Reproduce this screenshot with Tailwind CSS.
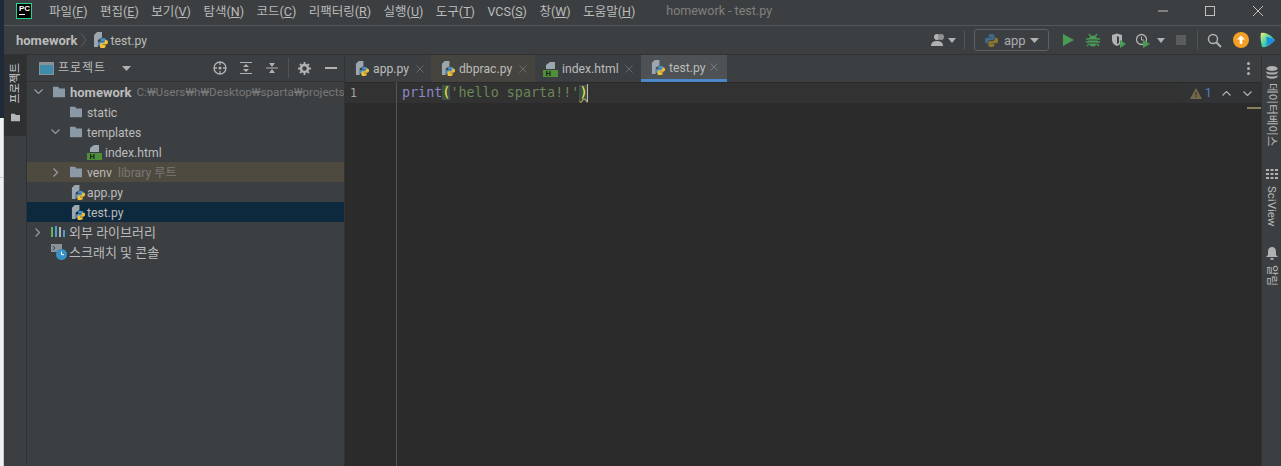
<!DOCTYPE html>
<html lang="ko">
<head>
<meta charset="utf-8" />
<title>homework - test.py</title>
<script src="https://cdn.jsdelivr.net/npm/@tailwindcss/browser@4"></script>
</head>
<body class="w-[1281px] h-[466px] overflow-hidden bg-[#3c3f41] text-[#bbbbbb] text-[13px] font-['Roboto','Noto_Sans_CJK_KR',sans-serif]">
<svg class="hidden">
  <symbol id="py" viewBox="0 0 16 16">
    <path d="M1 3l3-3h5v5.500L5 8v7H1z" fill="#9aa7b0"/>
    <path d="M10 6c-2 0-2.500.8-2.500 1.800V9h3v.6H7c-1.200 0-2 .8-2 2.200s.8 2.200 2 2.200h1v-1.300c0-1 .8-1.700 1.800-1.700h1.700c.9 0 1.500-.7 1.500-1.500V7.800C13 6.800 12 6 10 6z" fill="#4a90c4"/>
    <path d="M10 16c2 0 2.500-.8 2.500-1.800V13h-3v-.6H13c1.200 0 2-.8 2-2.200s-.8-2.200-2-2.200h-1v1.300c0 1-.8 1.700-1.800 1.700H8.500c-.9 0-1.500.7-1.500 1.500v2.300c0 1 1 1.700 3 1.700z" fill="#f2c037"/>
  </symbol>
  <symbol id="html" viewBox="0 0 16 16">
    <path d="M3 8V4l4-3h5v7z" fill="#9aa7b0"/>
    <rect x="0" y="9" width="15" height="7" fill="#4f8f3a"/>
    <path d="M3 10h1.300v2h2v-2h1.300v5H6.300v-2h-2v2H3z" fill="#1f2d1a"/>
  </symbol>
  <symbol id="folder" viewBox="0 0 16 14">
    <path d="M1 1h6l1.500 2H15v10H1z" fill="#8a99a5"/>
  </symbol>
</svg>

<div class="flex h-full">
  <div class="w-[4px] shrink-0 flex flex-col">
    <div class="h-[118px] bg-[#1f2a38]"></div>
    <div class="h-[59px] bg-[#f0f0f0] border-r border-[#c8c8c8]"></div>
    <div class="h-px bg-[#c8c8c8]"></div>
    <div class="flex-1 bg-[#f0f0f0] border-r border-[#c8c8c8]"></div>
  </div>

  <div class="flex-1 min-w-0 flex flex-col">
    <!-- title bar -->
    <div class="h-[26px] shrink-0 flex items-center border-b border-[#55585a]">
      <div class="ml-[12px] -mt-[4px] w-[16px] h-[16px] bg-black border border-[#21d789] text-white text-[8px] font-bold leading-[9px] pl-[2px] font-['Liberation_Sans']">PC<div class="w-[6px] h-[1px] bg-white mt-[1px]"></div></div>
      <div class="ml-[17px] flex gap-[12.5px] text-[#bbbbbb] text-[12.5px] whitespace-nowrap">
        <span>파일(<u>F</u>)</span><span>편집(<u>E</u>)</span><span>보기(<u>V</u>)</span><span>탐색(<u>N</u>)</span><span>코드(<u>C</u>)</span><span>리팩터링(<u>R</u>)</span><span>실행(<u>U</u>)</span><span>도구(<u>T</u>)</span><span>VCS(<u>S</u>)</span><span>창(<u>W</u>)</span><span>도움말(<u>H</u>)</span>
      </div>
      <span class="ml-[31px] text-[#808080] text-[12.5px] -mt-[2px]">homework - test.py</span>
      <div class="ml-auto flex items-center text-[#c0c0c0] -mt-[3px]">
        <svg class="w-[12px] h-[12px] mr-[35px]" viewBox="0 0 12 12"><path d="M1 6h10" stroke="currentColor"/></svg>
        <svg class="w-[12px] h-[12px] mr-[36px]" viewBox="0 0 12 12"><rect x="1.500" y="1.500" width="9" height="9" fill="none" stroke="currentColor"/></svg>
        <svg class="w-[12px] h-[12px] mr-[17px]" viewBox="0 0 12 12"><path d="M1 1l10 10M11 1L1 11" stroke="currentColor"/></svg>
      </div>
    </div>

    <!-- nav bar -->
    <div class="h-[29px] shrink-0 flex items-center border-b border-[#323232]">
      <span class="ml-[12px] mt-[2px] font-bold text-[#bbbbbb]">homework</span>
      <svg class="w-[8px] h-[16px] ml-[2px]" viewBox="0 0 8 16"><path d="M1 1l5 7-5 7" fill="none" stroke="#5a5d5f"/></svg>
      <svg class="w-[16px] h-[16px] ml-[5px]"><use href="#py"/></svg>
      <span class="ml-[2px] mt-[2px] text-[12.2px]">test.py</span>
      <div class="ml-auto flex items-center">
        <svg class="w-[15px] h-[14px]" viewBox="0 0 15 14"><circle cx="6" cy="4" r="3" fill="#afb1b3"/><path d="M0 13c0-4 3-5 6-5s6 1 6 5z" fill="#afb1b3"/><circle cx="10" cy="4" r="3" fill="#8f9193"/></svg>
        <svg class="w-[8px] h-[5px] ml-[2px]" viewBox="0 0 8 5"><path d="M0 0h8L4 5z" fill="#afb1b3"/></svg>
        <div class="w-px h-[20px] bg-[#515355] ml-[8px]"></div>
        <div class="ml-[9px] w-[75px] h-[22px] border border-[#5e6163] rounded-[3px] flex items-center pl-[9px]">
          <svg class="w-[15px] h-[15px]" viewBox="0 0 16 16"><path d="M8 1C5.500 1 5 2 5 3v1.500h3.500V5H3c-1.200 0-2 1-2 3s.8 3 2 3h1.500V9.500C4.500 8.300 5.500 7.500 7 7.500h2.500c1 0 1.800-.8 1.800-1.800V3c0-1-1-2-3.300-2z" fill="#3f6a8c"/><path d="M8 15c2.500 0 3-1 3-2v-1.500H7.500V11H13c1.200 0 2-1 2-3s-.8-3-2-3h-1.500v1.500c0 1.200-1 2-2.500 2H6.500c-1 0-1.800.8-1.800 1.800V13c0 1 1 2 3.300 2z" fill="#8a7430"/></svg>
          <span class="ml-[5px] mt-[2px] text-[#a9abad]">app</span>
          <svg class="w-[9px] h-[5px] ml-auto mr-[9px]" viewBox="0 0 9 5"><path d="M0 0h9L4.500 5z" fill="#afb1b3"/></svg>
        </div>
        <svg class="w-[11px] h-[12px] ml-[14px]" viewBox="0 0 11 12"><path d="M0 0l11 6-11 6z" fill="#499c54"/></svg>
        <svg class="w-[14px] h-[14px] ml-[12px]" viewBox="0 0 14 14"><path d="M3 1l2 2.500M11 1L9 3.500M0 6h14M0 9h14M1 13l2-2M13 13l-2-2" stroke="#499c54" fill="none" stroke-width="1.300"/><ellipse cx="7" cy="8" rx="4.500" ry="5.500" fill="#499c54"/><path d="M3 7h8M3 10h8" stroke="#3c3f41"/></svg>
        <svg class="w-[16px] h-[15px] ml-[11px]" viewBox="0 0 16 15"><path d="M1 2l5-1.500L11 2v5c0 3-2 5-5 6-3-1-5-3-5-6z" fill="#afb1b3"/><path d="M6 3v8l2-1V4z" fill="#3c3f41"/><path d="M9 7l6 4-6 4z" fill="#499c54"/></svg>
        <svg class="w-[16px] h-[15px] ml-[8px]" viewBox="0 0 16 15"><circle cx="6.500" cy="6.500" r="5" fill="none" stroke="#afb1b3" stroke-width="1.300"/><path d="M6.500 3.500v3.500H9" stroke="#afb1b3" fill="none"/><path d="M8 7l7 4-7 4z" fill="#499c54"/></svg>
        <svg class="w-[8px] h-[5px] ml-[6px]" viewBox="0 0 8 5"><path d="M0 0h8L4 5z" fill="#afb1b3"/></svg>
        <div class="w-[10px] h-[10px] bg-[#5a5c5e] ml-[11px]"></div>
        <div class="w-px h-[20px] bg-[#515355] ml-[11px]"></div>
        <svg class="w-[15px] h-[15px] ml-[9px]" viewBox="0 0 15 15"><circle cx="6" cy="6" r="4.500" fill="none" stroke="#afb1b3" stroke-width="1.500"/><path d="M9.500 9.500l4.500 4.500" stroke="#afb1b3" stroke-width="2"/></svg>
        <svg class="w-[16px] h-[16px] ml-[11px]" viewBox="0 0 16 16"><circle cx="8" cy="8" r="8" fill="#f4a023"/><path d="M8 3.500l4 4H9.300V12H6.700V7.500H4z" fill="#fff"/></svg>
        <svg class="w-[15px] h-[16px] ml-[11px] mr-[6px]" viewBox="0 0 15 16">
          <defs>
            <linearGradient id="logo" x1="0" y1="0" x2="1" y2="1">
              <stop offset="0" stop-color="#f2f07a"/>
              <stop offset="0.45" stop-color="#4fd6a0"/>
              <stop offset="1" stop-color="#1e8fe0"/>
            </linearGradient>
          </defs>
          <path d="M1 1c5-1 11 3 14 7-3 4-9 8-13 7-1-4-2-10-1-14z" fill="url(#logo)"/>
          <path d="M6 5c3 0 6 1.500 9 3-3 3-6 5-9 5 1-3 1-5 0-8z" fill="#1e8fe0"/>
        </svg>
      </div>
    </div>

    <div class="flex-1 min-h-0 flex">
      <!-- left tool strip -->
      <div class="w-[22px] shrink-0 self-start h-[81px] bg-[#2e3032] flex flex-col items-center">
        <span class="mt-[8px] [writing-mode:vertical-rl] [text-orientation:sideways] rotate-180 text-[11px] text-[#d0d2d4] leading-[13px]">프로젝트</span>
        <svg class="w-[11px] h-[9px] mt-[10px]" viewBox="0 0 16 14"><path d="M1 1h6l1.500 2H15v10H1z" fill="#b4b6b8"/></svg>
      </div>

      <!-- project panel -->
      <div class="w-[318px] shrink-0 border-l border-[#323232] flex flex-col min-h-0">
        <div class="h-[27px] shrink-0 flex items-center border-b border-[#323232]">
          <svg class="w-[15px] h-[13px] ml-[12px]" viewBox="0 0 15 13"><rect width="15" height="13" fill="#8a9299"/><rect x="1" y="3" width="13" height="9" fill="#3f8bab"/></svg>
          <span class="ml-[4px] text-[12px] tracking-[1px]">프로젝트</span>
          <svg class="w-[9px] h-[5px] ml-[16px]" viewBox="0 0 9 5"><path d="M0 0h9L4.500 5z" fill="#afb1b3"/></svg>
          <div class="ml-auto mr-[7px] flex items-center">
            <svg class="w-[14px] h-[14px]" viewBox="0 0 14 14"><circle cx="7" cy="7" r="6" fill="none" stroke="#afb1b3" stroke-width="1.300"/><circle cx="7" cy="7" r="1.600" fill="#afb1b3"/><path d="M7 1v3M7 10v3M1 7h3M10 7h3" stroke="#afb1b3" stroke-width="1.300"/></svg>
            <svg class="w-[12px] h-[12px] ml-[13px]" viewBox="0 0 12 12"><path d="M0 .5h12M0 11.500h12" stroke="#afb1b3"/><path d="M6 2l3 3H3zM6 10L3 7h6z" fill="#afb1b3"/></svg>
            <svg class="w-[12px] h-[12px] ml-[14px]" viewBox="0 0 12 12"><path d="M0 5.500h12M0 6.500h12" stroke="#afb1b3" stroke-width=".5"/><path d="M6 5L3 1h6zM6 7l3 4H3z" fill="#afb1b3"/></svg>
            <div class="w-px h-[20px] bg-[#515355] ml-[10px]"></div>
            <svg class="w-[13px] h-[13px] ml-[9px]" viewBox="0 0 13 13"><circle cx="6.500" cy="6.500" r="3.500" fill="none" stroke="#afb1b3" stroke-width="2.500"/><path d="M6.500 0v2.500M6.500 10.500V13M0 6.500h2.500M10.500 6.500H13M2 2l1.800 1.800M9.200 9.200L11 11M11 2L9.200 3.800M3.800 9.200L2 11" stroke="#afb1b3" stroke-width="1.800"/></svg>
            <div class="w-[12px] h-[2px] bg-[#afb1b3] ml-[14px]"></div>
          </div>
        </div>

        <div class="flex-1 whitespace-nowrap overflow-hidden text-[12.2px] [&>div>span]:mt-[2px] [&>div>svg]:shrink-0">
          <div class="h-[20px] flex items-center">
            <svg class="w-[9px] h-[6px] ml-[7px]" viewBox="0 0 9 6"><path d="M.5.500l4 4 4-4" fill="none" stroke="#9a9c9e" stroke-width="1.200"/></svg>
            <svg class="w-[14px] h-[12px] ml-[9px]"><use href="#folder"/></svg>
            <span class="ml-[4px] font-bold text-[13px]">homework</span>
            <span class="ml-[5px] text-[#787878] text-[11.700px]">C:₩Users₩h₩Desktop₩sparta₩projects</span>
          </div>
          <div class="h-[20px] flex items-center">
            <svg class="w-[14px] h-[12px] ml-[42px]"><use href="#folder"/></svg>
            <span class="ml-[4px]">static</span>
          </div>
          <div class="h-[20px] flex items-center">
            <svg class="w-[9px] h-[6px] ml-[24px]" viewBox="0 0 9 6"><path d="M.5.500l4 4 4-4" fill="none" stroke="#9a9c9e" stroke-width="1.200"/></svg>
            <svg class="w-[14px] h-[12px] ml-[9px]"><use href="#folder"/></svg>
            <span class="ml-[4px]">templates</span>
          </div>
          <div class="h-[20px] flex items-center">
            <svg class="w-[16px] h-[16px] ml-[60px]"><use href="#html"/></svg>
            <span class="ml-[2px]">index.html</span>
          </div>
          <div class="h-[20px] flex items-center bg-[#4e4a3f]">
            <svg class="w-[6px] h-[9px] ml-[26px]" viewBox="0 0 6 9"><path d="M.5.500l4 4-4 4" fill="none" stroke="#9a9c9e" stroke-width="1.200"/></svg>
            <svg class="w-[14px] h-[12px] ml-[10px]"><use href="#folder"/></svg>
            <span class="ml-[4px]">venv</span>
            <span class="ml-[6px] text-[#787878]">library 루트</span>
          </div>
          <div class="h-[20px] flex items-center">
            <svg class="w-[15px] h-[15px] ml-[44px]"><use href="#py"/></svg>
            <span class="ml-[1px]">app.py</span>
          </div>
          <div class="h-[20px] flex items-center bg-[#0d293e]">
            <svg class="w-[15px] h-[15px] ml-[44px]"><use href="#py"/></svg>
            <span class="ml-[1px]">test.py</span>
          </div>
          <div class="h-[20px] flex items-center">
            <svg class="w-[6px] h-[9px] ml-[8px]" viewBox="0 0 6 9"><path d="M.5.500l4 4-4 4" fill="none" stroke="#9a9c9e" stroke-width="1.200"/></svg>
            <svg class="w-[15px] h-[12px] ml-[10px]" viewBox="0 0 15 12"><path d="M1 1v10" stroke="#6fae5f" stroke-width="2"/><path d="M5 0v11" stroke="#4c9fc9" stroke-width="2"/><path d="M9 1v10" stroke="#afb1b3" stroke-width="2"/><path d="M13 4v7" stroke="#4c9fc9" stroke-width="2"/></svg>
            <span class="ml-[3px] text-[13px]">외부 라이브러리</span>
          </div>
          <div class="h-[20px] flex items-center">
            <svg class="w-[16px] h-[16px] ml-[24px]" viewBox="0 0 16 16"><rect x="0" y="0" width="11" height="8" fill="#8a9299"/><path d="M2 2l2 2-2 2" stroke="#3c3f41" fill="none"/><circle cx="10.500" cy="10.500" r="5.500" fill="#3592c4"/><path d="M10.500 7.500v3.200h2.500" stroke="#fff" fill="none"/></svg>
            <span class="ml-[2px] text-[13px]">스크래치 및 콘솔</span>
          </div>
        </div>
      </div>

      <!-- editor -->
      <div class="flex-1 min-w-0 flex flex-col border-l border-[#323232]">
        <div class="h-[27px] shrink-0 flex items-stretch text-[#bbbbbb] text-[12.2px] [&>div>span]:mt-[2px]">
          <div class="w-[86px] flex items-center bg-[#3c3f41]">
            <svg class="w-[15px] h-[15px] ml-[10px]"><use href="#py"/></svg>
            <span class="ml-[3px]">app.py</span>
            <svg class="w-[8px] h-[8px] ml-auto mr-[7px]" viewBox="0 0 9 9"><path d="M.5.500l8 8M8.500.500l-8 8" stroke="#6e7072"/></svg>
          </div>
          <div class="w-[104px] flex items-center bg-[#45443f]">
            <svg class="w-[15px] h-[15px] ml-[10px]"><use href="#py"/></svg>
            <span class="ml-[3px]">dbprac.py</span>
            <svg class="w-[8px] h-[8px] ml-auto mr-[8px]" viewBox="0 0 9 9"><path d="M.5.500l8 8M8.500.500l-8 8" stroke="#6e7072"/></svg>
          </div>
          <div class="w-[106px] flex items-center bg-[#3c3f41]">
            <svg class="w-[16px] h-[16px] ml-[8px]"><use href="#html"/></svg>
            <span class="ml-[3px]">index.html</span>
            <svg class="w-[8px] h-[8px] ml-auto mr-[8px]" viewBox="0 0 9 9"><path d="M.5.500l8 8M8.500.500l-8 8" stroke="#6e7072"/></svg>
          </div>
          <div class="w-[86px] flex items-center bg-[#4e5254] border-b-[3px] border-[#4a88c7]">
            <svg class="w-[15px] h-[15px] ml-[10px]"><use href="#py"/></svg>
            <span class="ml-[3px]">test.py</span>
            <svg class="w-[8px] h-[8px] ml-auto mr-[9px]" viewBox="0 0 9 9"><path d="M.5.500l8 8M8.500.500l-8 8" stroke="#7e8082"/></svg>
          </div>
          <div class="ml-auto flex flex-col gap-[2px] justify-center mr-[11px]">
            <div class="w-[3px] h-[3px] rounded-full bg-[#afb1b3]"></div>
            <div class="w-[3px] h-[3px] rounded-full bg-[#afb1b3]"></div>
            <div class="w-[3px] h-[3px] rounded-full bg-[#afb1b3]"></div>
          </div>
        </div>

        <div class="flex-1 min-h-0 flex bg-[#2b2b2b]">
          <div class="w-[52px] shrink-0 border-r border-[#555555] pt-[1px] h-full">
            <div class="h-[20px] bg-[#323232] pl-[5px] leading-[20px] text-[#a4a3a3] font-['DejaVu_Sans_Mono'] text-[11.500px]">1</div>
          </div>
          <div class="flex-1 min-w-0 relative">
            <div class="mt-[1px] h-[20px] bg-[#323232] pl-[5px] leading-[20px] font-['DejaVu_Sans_Mono'] text-[13.400px]"><span class="whitespace-pre"><span class="text-[#8888c6]">print</span><span class="text-[#ffef28] bg-[#3b514d]">(</span><span class="text-[#6a8759]">'hello sparta!!'</span><span class="text-[#ffef28] bg-[#3b514d] underline decoration-wavy decoration-[#a8a060]">)</span></span><span class="inline-block w-px h-[18px] bg-[#bbbbbb] align-middle"></span></div>
            <div class="absolute top-[1px] right-[3px] h-[20px] w-[77px] bg-[#313335] rounded-[3px] flex items-center">
              <svg class="w-[12px] h-[11px] ml-[9px]" viewBox="0 0 12 11"><path d="M6 0l6 11H0z" fill="#75694c"/><path d="M5.400 4h1.200v3.500H5.400zM5.400 8.300h1.200v1.200H5.400z" fill="#313335"/></svg>
              <span class="ml-[3px] text-[#4a88c7] text-[12px]">1</span>
              <svg class="w-[9px] h-[5px] ml-[10px]" viewBox="0 0 9 5"><path d="M.5 4.500l4-4 4 4" fill="none" stroke="#afb1b3" stroke-width="1.200"/></svg>
              <svg class="w-[9px] h-[5px] ml-[12px]" viewBox="0 0 9 5"><path d="M.5.500l4 4 4-4" fill="none" stroke="#afb1b3" stroke-width="1.200"/></svg>
            </div>
            <div class="absolute top-[25px] right-0 w-[14px] h-[2px] bg-[#8a7f5e]"></div>
          </div>
        </div>
      </div>

      <!-- right tool strip -->
      <div class="w-[20px] shrink-0 border-l border-[#323232] flex flex-col items-center text-[#bbbbbb] text-[11.500px]">
        <svg class="w-[12px] h-[13px] mt-[11px]" viewBox="0 0 12 13"><ellipse cx="6" cy="2.500" rx="5.500" ry="2.500" fill="#afb1b3"/><path d="M.5 5c1 2 10 2 11 0v2c-1 2-10 2-11 0zM.5 9c1 2 10 2 11 0v1.500c-1 3-10 3-11 0z" fill="#afb1b3"/></svg>
        <span class="mt-[4px] [writing-mode:vertical-rl] [text-orientation:sideways] leading-[13px]">데이터베이스</span>
        <svg class="w-[12px] h-[10px] mt-[23px]" viewBox="0 0 12 10"><path d="M0 1h3M4.500 1h3M9 1h3M0 5h3M4.500 5h3M9 5h3M0 9h3M4.500 9h3M9 9h3" stroke="#afb1b3" stroke-width="2"/></svg>
        <span class="mt-[7px] [writing-mode:vertical-rl] [text-orientation:sideways] leading-[13px]">SciView</span>
        <svg class="w-[12px] h-[13px] mt-[20px]" viewBox="0 0 12 13"><path d="M6 0c3 0 4 2.500 4 5v3l2 2H0l2-2V5c0-2.500 1-5 4-5z" fill="#afb1b3"/><path d="M4.500 11h3v1.800h-3z" fill="#afb1b3"/></svg>
        <span class="mt-[5px] [writing-mode:vertical-rl] [text-orientation:sideways] leading-[13px]">알림</span>
      </div>
    </div>
  </div>
</div>
</body>
</html>
